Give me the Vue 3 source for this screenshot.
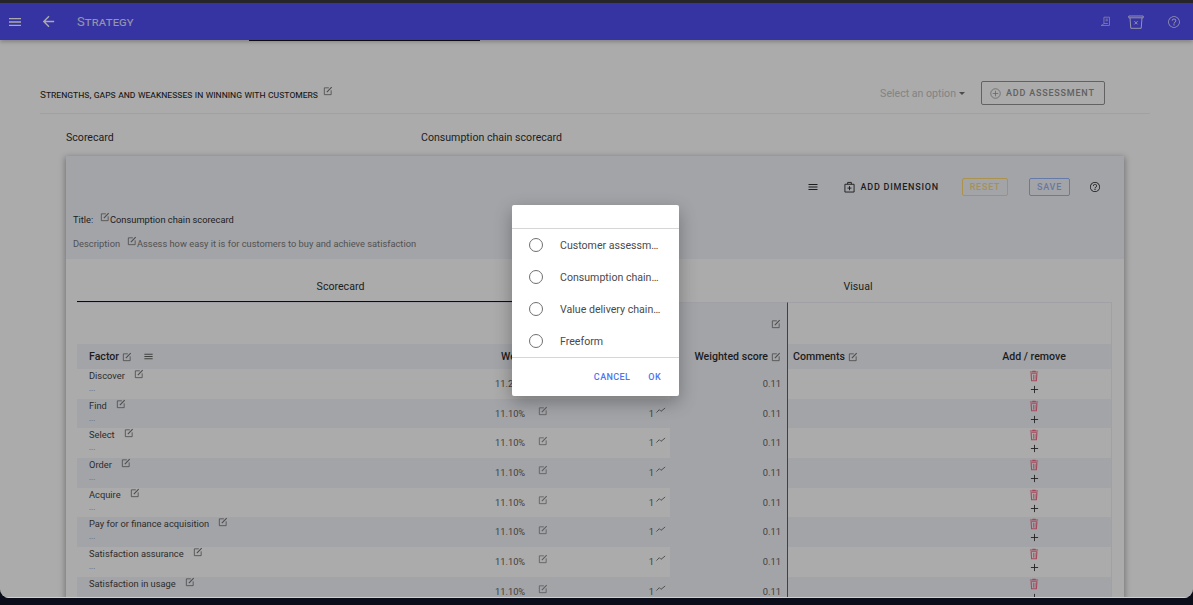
<script setup>
const factors = [
  { name: 'Discover', weight: '11.20%' },
  { name: 'Find', weight: '11.10%' },
  { name: 'Select', weight: '11.10%' },
  { name: 'Order', weight: '11.10%' },
  { name: 'Acquire', weight: '11.10%' },
  { name: 'Pay for or finance acquisition', weight: '11.10%' },
  { name: 'Satisfaction assurance', weight: '11.10%' },
  { name: 'Satisfaction in usage', weight: '11.10%' },
];

const options = ['Customer assessment', 'Consumption chain scorecard', 'Value delivery chain scorecard', 'Freeform'];
</script>

<template>
  <div class="screen">
    <svg class="sprite" aria-hidden="true">
      <symbol id="ic-edit" viewBox="0 0 12 12">
        <path d="M7 2.2H1.600v8.200h8.200V5.200" fill="none" stroke="currentColor" stroke-width="1" />
        <path d="M4.600 7.400 10.400 1.400" fill="none" stroke="currentColor" stroke-width="1.300" />
      </symbol>
      <symbol id="ic-menu" viewBox="0 0 24 24">
        <path fill="currentColor" d="M3 18h18v-2H3v2zm0-5h18v-2H3v2zm0-7v2h18V6H3z" />
      </symbol>
      <symbol id="ic-help" viewBox="0 0 24 24">
        <path fill="currentColor" d="M11 18h2v-2h-2v2zm1-16C6.480 2 2 6.480 2 12s4.480 10 10 10 10-4.480 10-10S17.520 2 12 2zm0 18.600c-4.740 0-8.600-3.860-8.600-8.600S7.260 3.400 12 3.400s8.600 3.860 8.600 8.600-3.860 8.600-8.600 8.600zM12 6c-2.210 0-4 1.790-4 4h1.600c0-1.300 1.100-2.400 2.400-2.400s2.400 1.100 2.400 2.400c0 2.200-3.200 2-3.200 5h1.600c0-2.250 3.200-2.500 3.200-5 0-2.210-1.790-4-4-4z" />
      </symbol>
      <symbol id="ic-trend" viewBox="0 0 12 8">
        <path d="M.5 6.500 4 3l2 2 5-4" fill="none" stroke="currentColor" stroke-width="1" />
      </symbol>
      <symbol id="ic-trash" viewBox="0 0 12 14">
        <path fill="currentColor" d="M4.200.6h3.600l.5.9h2.600v1.300H1.100V1.500h2.600zM1.800 3.600h8.400l-.7 9.800H2.500zm1.500 1.100.4 7.500h4.600l.4-7.500zm1.600.8h.9v5.900h-.9zm1.900 0h.9v5.900h-.9z" />
      </symbol>
      <symbol id="ic-plus" viewBox="0 0 10 10">
        <path d="M5 1v8M1 5h8" fill="none" stroke="currentColor" stroke-width="1" />
      </symbol>
    </svg>

    <div class="window">
      <header class="toolbar">
        <svg class="tb-icon tb-menu"><use href="#ic-menu" /></svg>
        <svg class="tb-icon tb-back" viewBox="0 0 24 24">
          <path fill="currentColor" d="M20 11H7.830l5.590-5.590L12 4l-8 8 8 8 1.410-1.410L7.830 13H20v-2z" />
        </svg>
        <span class="tb-title">Strategy</span>
        <span class="tb-spacer"></span>
        <svg class="tb-doc" viewBox="0 0 14 14">
          <path d="M5 1.500h7v10.500H1.500c1.800-.6 3.500-1.200 3.500-3zM7 4h3M7 6h3M5 9.500h5" fill="none" stroke="currentColor" stroke-width="1" />
        </svg>
        <svg class="tb-box" viewBox="0 0 16 14">
          <path d="M.8 1h14.400v1.800H.8zM2 3l.8 10.300h10.400L14 3M6.400 6.200l3.200 3.200M9.600 6.200 6.400 9.400" fill="none" stroke="currentColor" stroke-width="1" />
        </svg>
        <svg class="tb-help"><use href="#ic-help" /></svg>
      </header>

      <div class="page-tabs"><span class="page-tab"></span></div>

      <section class="section-head">
        <h2 class="section-title">
          Strengths, gaps and weaknesses in winning with customers
          <svg class="ic-edit ic-section"><use href="#ic-edit" /></svg>
        </h2>
        <div class="section-actions">
          <span class="select">Select an option <i class="caret"></i></span>
          <button class="add-btn">
            <svg class="add-icon" viewBox="0 0 12 12">
              <circle cx="6" cy="6" r="5.200" fill="none" stroke="currentColor" stroke-width=".8" />
              <path d="M6 3v6M3 6h6" fill="none" stroke="currentColor" stroke-width=".8" />
            </svg>
            Add assessment
          </button>
        </div>
      </section>

      <div class="crumbs">
        <span class="crumb-a">Scorecard</span>
        <span>Consumption chain scorecard</span>
      </div>

      <div class="card">
        <div class="card-head">
          <div class="card-tools">
            <svg class="ct-menu"><use href="#ic-menu" /></svg>
            <span class="ct-add">
              <svg class="ct-add-icon" viewBox="0 0 12 13">
                <path d="M4 3.500V1.500h4v2M1 3.500h10v8.500H1zM6 5.500v4.500M3.800 7.700h4.400" fill="none" stroke="currentColor" stroke-width="1" />
              </svg>
              Add dimension
            </span>
            <button class="ct-btn ct-reset">Reset</button>
            <button class="ct-btn ct-save">Save</button>
            <svg class="ct-help"><use href="#ic-help" /></svg>
          </div>
          <div class="card-title">
            <span class="label">Title:</span>
            <svg class="ic-edit ic-raised"><use href="#ic-edit" /></svg>
            <span>Consumption chain scorecard</span>
          </div>
          <div class="card-desc">
            <span class="label-desc">Description</span>
            <svg class="ic-edit ic-raised"><use href="#ic-edit" /></svg>
            <span>Assess how easy it is for customers to buy and achieve satisfaction</span>
          </div>
        </div>

        <div class="tabs">
          <div class="tab tab--active">Scorecard</div>
          <div class="tab">Visual</div>
        </div>

        <div class="table">
          <div class="row row--blank">
            <div></div>
            <div></div>
            <div></div>
            <div class="c-weighted"><svg class="ic-edit"><use href="#ic-edit" /></svg></div>
            <div class="c-comments"></div>
            <div></div>
          </div>

          <div class="row row--head">
            <div class="c-factor">
              Factor
              <svg class="ic-edit"><use href="#ic-edit" /></svg>
              <svg class="head-menu"><use href="#ic-menu" /></svg>
            </div>
            <div class="c-weight-head">Weight</div>
            <div class="c-score-head">Score</div>
            <div class="c-weighted">
              Weighted score
              <svg class="ic-edit"><use href="#ic-edit" /></svg>
            </div>
            <div class="c-comments">
              Comments
              <svg class="ic-edit"><use href="#ic-edit" /></svg>
            </div>
            <div class="c-remove-head">Add / remove</div>
          </div>

          <div v-for="f in factors" :key="f.name" class="row row--item">
            <div class="c-factor">
              <div class="f-name">
                <span>{{ f.name }}</span>
                <svg class="ic-edit"><use href="#ic-edit" /></svg>
              </div>
              <div class="f-dots">...</div>
            </div>
            <div class="c-weight">
              <span>{{ f.weight }}</span>
              <svg class="ic-edit"><use href="#ic-edit" /></svg>
            </div>
            <div class="c-score">
              1
              <svg class="ic-trend"><use href="#ic-trend" /></svg>
            </div>
            <div class="c-weighted">0.11</div>
            <div class="c-comments"></div>
            <div class="c-remove">
              <svg class="ic-trash"><use href="#ic-trash" /></svg>
              <svg class="ic-plus"><use href="#ic-plus" /></svg>
            </div>
          </div>
        </div>
      </div>

      <div class="scrim">
        <div class="dialog">
          <div class="dialog-title"></div>
          <div class="dialog-body">
            <label v-for="o in options" :key="o" class="option">
              <span class="radio"></span>
              <span class="option-text">{{ o }}</span>
            </label>
          </div>
          <div class="dialog-actions">
            <button class="text-btn">Cancel</button>
            <button class="text-btn">OK</button>
          </div>
        </div>
      </div>
    </div>
  </div>
</template>

<style>
html,
body {
  margin: 0;
  background: #0b0d1a;
}
</style>

<style scoped>
.screen {
  height: 605px;
  overflow: hidden;
  font-family: Roboto, "Liberation Sans", sans-serif;
  color: #1a1a1a;
  font-size: 10.6px;
  border-top: 3px solid #26262a;
  box-sizing: border-box;
}

.sprite {
  display: none;
}

.window {
  position: relative;
  height: 595px;
  overflow: hidden;
  background: #fff;
  border-radius: 0 0 9px 9px;
}

.toolbar {
  display: flex;
  align-items: center;
  height: 37px;
  background: #443ff1;
  color: #fff;
  box-shadow: 0 2px 4px rgba(0, 0, 0, 0.25);
  position: relative;
}

.tb-icon {
  flex: none;
}

.tb-menu {
  width: 16px;
  height: 16px;
  margin-left: 7px;
}

.tb-back {
  width: 17px;
  height: 17px;
  margin-left: 17px;
}

.tb-title {
  margin-left: 20px;
  font-size: 13px;
  font-variant: small-caps;
  letter-spacing: 0.1px;
  opacity: 0.8;
}

.tb-spacer {
  flex: 1;
}

.tb-doc {
  width: 11px;
  height: 11px;
  opacity: 0.7;
}

.tb-box {
  width: 16px;
  height: 14px;
  margin-left: 17px;
  opacity: 0.8;
}

.tb-help {
  width: 14px;
  height: 14px;
  margin-left: 23px;
  margin-right: 12px;
  opacity: 0.8;
}

.page-tabs {
  height: 3px;
}

.page-tab {
  display: block;
  margin-left: 249px;
  width: 231px;
  border-bottom: 1.5px solid #000;
}

.section-head {
  display: flex;
  align-items: center;
  justify-content: space-between;
  margin: 38px 43px 0 40px;
  padding: 0 45px 8px 0;
  border-bottom: 1.5px solid #eeeef6;
}

.section-title {
  margin: 0;
  font-size: 9.93px;
  font-weight: 400;
  font-variant: small-caps;
  color: #111;
}

.ic-edit {
  display: inline-block;
  flex: none;
  width: 10px;
  height: 10px;
  color: #666;
  vertical-align: 1px;
}

.ic-section {
  margin-left: 3px;
  vertical-align: 2px;
}

.ic-raised {
  margin-top: -5px;
}

.section-actions {
  display: flex;
  align-items: center;
}

.select {
  color: #c0c0c0;
  font-size: 10.6px;
  display: flex;
  align-items: center;
  gap: 3px;
}

.caret {
  width: 0;
  height: 0;
  border-left: 3px solid transparent;
  border-right: 3px solid transparent;
  border-top: 3px solid #666;
}

.add-btn {
  display: flex;
  align-items: center;
  gap: 5px;
  box-sizing: border-box;
  width: 124px;
  height: 24px;
  margin-left: 16px;
  padding: 0 0 0 8px;
  border: 1px solid #8a8a8a;
  border-radius: 2px;
  background: transparent;
  color: #888;
  font: 500 9px Roboto, sans-serif;
  letter-spacing: 0.8px;
  text-transform: uppercase;
}

.add-icon {
  width: 11px;
  height: 11px;
}

.crumbs {
  display: flex;
  height: 14px;
  margin: 17px 0 11px 66px;
  line-height: 14px;
}

.crumb-a {
  width: 355px;
}

.card {
  margin: 0 69px 0 66px;
  background: #fff;
  box-shadow: 0 2px 6px 1px rgba(0, 0, 0, 0.35);
}

.card-head {
  box-sizing: border-box;
  height: 103px;
  padding: 22px 7px 0;
  background: #f3f4fa;
}

.card-tools {
  display: flex;
  align-items: center;
  height: 18px;
  padding-right: 16px;
  justify-content: flex-end;
}

.ct-menu {
  width: 12px;
  height: 12px;
  margin-right: 25px;
}

.ct-add {
  display: flex;
  align-items: center;
  gap: 6px;
  font-size: 9px;
  font-weight: 500;
  letter-spacing: 0.78px;
  text-transform: uppercase;
  margin-right: 23px;
}

.ct-add-icon {
  width: 11px;
  height: 12px;
}

.ct-btn {
  box-sizing: border-box;
  height: 18px;
  padding: 0;
  border-radius: 2px;
  background: transparent;
  font: 500 9px Roboto, sans-serif;
  letter-spacing: 0.75px;
  text-transform: uppercase;
}

.ct-reset {
  width: 46px;
  margin-right: 21px;
  border: 1px solid #ffd768;
  color: #f5d67a;
}

.ct-save {
  width: 41px;
  margin-right: 19px;
  border: 1px solid #8db0ff;
  color: #96aef0;
}

.ct-help {
  width: 12px;
  height: 12px;
}

.card-title {
  display: flex;
  align-items: center;
  height: 14px;
  margin-top: 16px;
  font-size: 9.3px;
}

.label {
  width: 20px;
  margin-right: 7px;
}

.card-desc {
  display: flex;
  align-items: center;
  height: 14px;
  margin-top: 10px;
  font-size: 9.3px;
  color: #6f6f6f;
}

.label-desc {
  width: 47px;
  margin-right: 7px;
}

.tabs {
  display: grid;
  grid-template-columns: 527px 508px;
  margin: 0 12px 0 11px;
  height: 43px;
}

.tab {
  box-sizing: border-box;
  padding-top: 21px;
  text-align: center;
}

.tab--active {
  border-bottom: 1px solid #000;
}

.table {
  margin: 0 12px 0 11px;
  border-right: 1px solid #eeeef6;
}

.row {
  display: grid;
  grid-template-columns: 411px 94px 88px 117px 170px 1fr;
}

.row--blank {
  height: 42px;
}

.row--blank > div {
  border-top: 1px solid #eeeef6;
}

.row--head {
  height: 25px;
  align-items: center;
  background: #f3f4fa;
  font-size: 10.6px;
  font-weight: 500;
}

.row--head > div {
  height: 100%;
  display: flex;
  align-items: center;
}

.row--item {
  height: 29.7px;
  font-size: 9.3px;
  color: #333;
}

.row--item:nth-child(even) {
  background: #f3f4fa;
}

.c-factor {
  padding-left: 12px;
  gap: 3px;
}

.head-menu {
  width: 11px;
  height: 11px;
  margin-left: 8px;
  color: #555;
}

.c-weight-head {
  padding-left: 13px;
}

.c-score-head {
  justify-content: flex-end;
  padding-right: 22px;
}

.f-name {
  display: flex;
  align-items: center;
  gap: 9px;
  height: 13px;
}

.f-name .ic-edit {
  margin-top: -3px;
}

.f-dots {
  line-height: 13px;
  color: #888;
  font-size: 8px;
}

.c-weight {
  display: flex;
  align-items: center;
  padding: 0 0 1px 7px;
  gap: 13px;
  color: #555;
}

.c-weight .ic-edit {
  margin-top: -4px;
  color: #808080;
}

.c-score {
  display: flex;
  align-items: center;
  justify-content: flex-end;
  gap: 2px;
  padding: 0 4px 1px 0;
  color: #555;
}

.ic-trend {
  width: 10px;
  height: 7px;
  margin-top: -5px;
  color: #555;
}

.c-weighted {
  background: #f3f4fa;
  display: flex;
  align-items: center;
  justify-content: flex-end;
  padding-right: 6px;
  gap: 3px;
}

.row--item .c-weighted {
  padding-bottom: 1px;
  color: #555;
}

.c-comments {
  border-left: 1px solid #555;
  padding-left: 5px;
  gap: 3px;
}

.row--head .c-remove-head {
  justify-content: center;
}

.c-remove {
  display: flex;
  flex-direction: column;
  align-items: center;
}

.ic-trash {
  width: 10px;
  height: 12px;
  margin-top: 1px;
  color: #f4637f;
}

.ic-plus {
  width: 9px;
  height: 9px;
  margin-top: 3px;
  color: #222;
}

.scrim {
  position: absolute;
  inset: 0;
  display: flex;
  align-items: center;
  justify-content: center;
  padding-right: 2px;
  background: rgba(33, 33, 33, 0.375);
  box-shadow: inset 0 -1px 0 #cfcfcf;
}

.dialog {
  width: 167px;
  height: 191px;
  background: #fff;
  border-radius: 2px;
  box-shadow: 0 6px 18px rgba(0, 0, 0, 0.3);
  display: flex;
  flex-direction: column;
}

.dialog-title {
  height: 23px;
  border-bottom: 1px solid #d6d6d6;
}

.dialog-body {
  height: 128px;
  border-bottom: 1px solid #d6d6d6;
}

.option {
  display: flex;
  align-items: center;
  height: 32px;
  padding-left: 17px;
  color: #4a4a4a;
}

.radio {
  box-sizing: border-box;
  width: 14px;
  height: 14px;
  border: 1px solid #6f6f6f;
  border-radius: 50%;
}

.option-text {
  width: 101px;
  margin-left: 17px;
  white-space: nowrap;
  overflow: hidden;
  text-overflow: ellipsis;
}

.dialog-actions {
  display: flex;
  justify-content: flex-end;
  align-items: center;
  flex: 1;
  gap: 18px;
  padding-right: 18px;
}

.text-btn {
  padding: 0;
  border: 0;
  background: none;
  color: #4a76f0;
  font: 500 9px Roboto, sans-serif;
  letter-spacing: 0.4px;
  text-transform: uppercase;
}
</style>
